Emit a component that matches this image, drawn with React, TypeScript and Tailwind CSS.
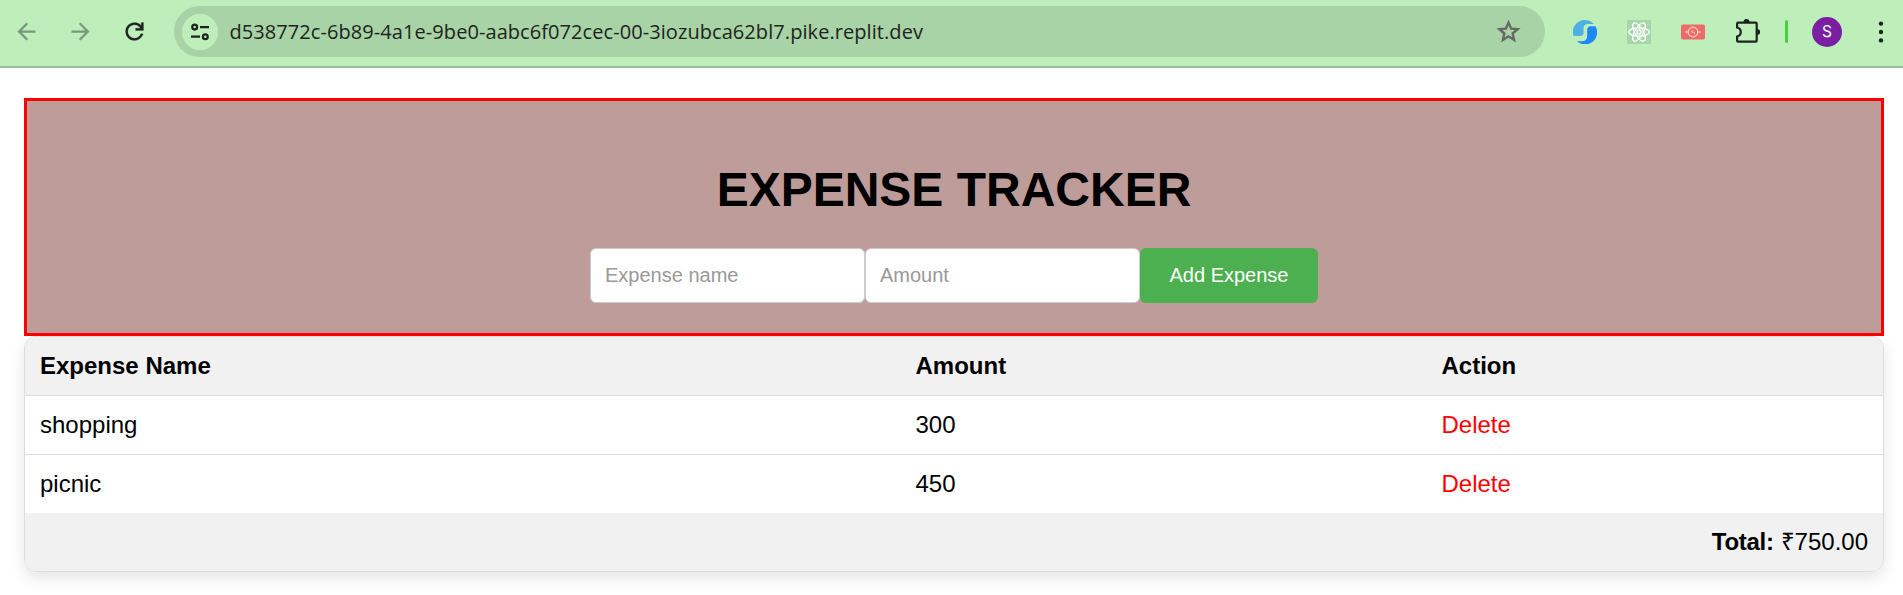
import React from "react";

const symbol = { viewBox: "0 -960 960 960", fill: "currentColor" };

function Toolbar() {
  return (
    <header className="flex h-[68px] items-start border-b-2 border-[#97c29b] bg-[#beefbb] pt-1.5 font-['Open_Sans',sans-serif]">
      <div className="flex h-[51px] w-[174px] shrink-0 items-center gap-[27px] pl-[13px] text-[#1f2320]">
        <svg {...symbol} className="size-[27px] text-[#79977a]">
          <path d="m313-440 224 224-57 56-320-320 320-320 57 56-224 224h487v80H313Z" />
        </svg>
        <svg {...symbol} className="size-[27px] text-[#79977a]">
          <path d="M647-440H160v-80h487L423-744l57-56 320 320-320 320-57-56 224-224Z" />
        </svg>
        <svg {...symbol} className="size-[27px]" stroke="currentColor" strokeWidth="8">
          <path d="M480-160q-134 0-227-93t-93-227q0-134 93-227t227-93q69 0 132 28.5T720-690v-110h80v280H520v-80h168q-32-56-87.5-88T480-720q-100 0-170 70t-70 170q0 100 70 170t170 70q77 0 139-44t87-116h84q-28 106-114 173t-196 67Z" />
        </svg>
      </div>
      <div className="flex h-[51px] w-[1371px] shrink-0 items-center rounded-full bg-[#a7d3a6] pr-[22px] pl-[7.5px]">
        <span className="flex size-9 shrink-0 items-center justify-center rounded-full bg-[#beefbb]">
          <svg viewBox="0 0 18 18" className="size-[18px]" fill="none" stroke="#1f2320" strokeWidth="2.3">
            <circle cx="3.7" cy="4.1" r="2.4" />
            <path d="M9 4.1h9M0 13.7h9" />
            <circle cx="14.3" cy="13.7" r="2.4" />
          </svg>
        </span>
        <span className="ml-3 grow text-[20px] leading-[27px] tracking-[0.07px] whitespace-nowrap text-[#1f2320]">
          d538772c-6b89-4a1e-9be0-aabc6f072cec-00-3iozubca62bl7.pike.replit.dev
        </span>
        <svg {...symbol} className="size-[29px] text-[#666a67]">
          <path d="m354-287 126-76 126 77-33-144 111-96-146-13-58-136-58 135-146 13 111 97-33 143ZM233-120l65-281L80-590l288-25 112-265 112 265 288 25-218 189 65 281-247-149-247 149Z" />
        </svg>
      </div>
      <div className="flex h-[51px] grow items-center pl-[27.5px]">
        <svg viewBox="0 0 24 24" className="size-6">
          <path d="M14.500 .3A12 12 0 0 0 .6 16h6.900q3-.4 3-3.500V8q.5-4 4-4h6.500Q18 1 14.500.3Z" fill="#4fb0e3" />
          <path d="M22.500 6.300A12 12 0 0 1 4 21.200H9.500q4.500-.6 4.700-4.700v-6.800q.3-3.200 3.300-3.400Z" fill="#1e88fb" />
        </svg>
        <svg viewBox="0 0 24 24" className="ml-[30px] size-6" fill="none" stroke="white" strokeWidth="1.3">
          <rect width="24" height="24" rx="1" fill="#a9d5aa" stroke="none" />
          <ellipse cx="12" cy="12" rx="10.300" ry="4.200" />
          <ellipse cx="12" cy="12" rx="10.300" ry="4.200" transform="rotate(60 12 12)" />
          <ellipse cx="12" cy="12" rx="10.300" ry="4.200" transform="rotate(120 12 12)" />
          <circle cx="12" cy="12" r="2" />
        </svg>
        <svg viewBox="0 0 24 24" className="ml-[30px] size-6" fill="none" stroke="#f8c4bb" strokeWidth="1.4">
          <rect y="4.500" width="24" height="15" rx="2" fill="#ec6b66" stroke="none" />
          <circle cx="12" cy="12" r="4.700" />
          <path d="M11 9.800v2.500h2.500v1.500" strokeWidth="1" />
          <path d="M4 12l2.500-1.700v3.400ZM20 12l-2.500-1.700v3.400Z" fill="#f8c4bb" stroke="none" />
        </svg>
        <svg viewBox="0 0 24 24" className="ml-[31px] size-6 -translate-y-px" fill="none" stroke="#1f2320" strokeWidth="2.200">
          <path d="M2.500 3.700h17.200q1 0 1 1v17q0 1-1 1H2.100q-1 0-1-1V17.500q3.700-1 3.700-4.500t-3.700-4.500V4.700q0-1 1-1Z" />
          <path d="M7.500 3a3 3 0 0 1 6 0ZM21.200 10a3 3 0 0 1 0 6Z" fill="#1f2320" stroke="none" />
        </svg>
        <span className="ml-[25.5px] h-[23px] w-[3px] rounded-sm bg-[#48d13e]" />
        <span className="ml-6 flex size-[30px] items-center justify-center rounded-full bg-[#7b1fa2] font-['Inter',sans-serif] text-[15.5px] text-white">
          S
        </span>
        <svg viewBox="0 0 6 22" className="ml-9 h-[22px] w-1.5" fill="#1f2320">
          <circle cx="3" cy="2.600" r="2.200" />
          <circle cx="3" cy="11" r="2.200" />
          <circle cx="3" cy="19.400" r="2.200" />
        </svg>
      </div>
    </header>
  );
}

const expenses = [
  { name: "shopping", amount: 300 },
  { name: "picnic", amount: 450 },
];

export default function App() {
  const total = expenses.reduce((sum, e) => sum + e.amount, 0);
  const field =
    "h-[55px] w-[275px] rounded-md border border-[#ccc] bg-white px-[14px] text-[20px] placeholder:text-[#999] outline-none";
  return (
    <div className="h-[595px] overflow-hidden bg-white font-['Liberation_Sans',sans-serif] text-black">
      <Toolbar />
      <main className="mt-[30px] mr-[19px] ml-6">
        <section className="flex h-[238px] flex-col items-center border-[3px] border-[#f00] bg-[#be9c99] pt-[61px]">
          <h1 className="h-[86px] text-[48px] leading-[55px] font-bold">EXPENSE TRACKER</h1>
          <form className="flex">
            <input className={field} placeholder="Expense name" />
            <input className={field} placeholder="Amount" />
            <button type="button" className="h-[55px] w-[178px] rounded-md bg-[#4caf50] pb-0.5 text-[20px] text-white">
              Add Expense
            </button>
          </form>
        </section>
        <div className="overflow-hidden rounded-xl border border-[#ddd] text-[24px] leading-[28px] shadow-[0_6px_15px_rgba(0,0,0,0.1)]">
          <table className="w-full table-fixed border-collapse text-left">
            <colgroup>
              <col className="w-[875.5px]" />
              <col className="w-[526px]" />
              <col />
            </colgroup>
            <thead>
              <tr className="h-[58px] border-b border-[#ddd] bg-[#f1f1f1]">
                <th className="px-[15px]">Expense Name</th>
                <th className="px-[15px]">Amount</th>
                <th className="px-[15px]">Action</th>
              </tr>
            </thead>
            <tbody>
              {expenses.map((e) => (
                <tr key={e.name} className="h-[59px] border-b border-[#ddd] last:border-b-0">
                  <td className="px-[15px]">{e.name}</td>
                  <td className="px-[15px]">{e.amount}</td>
                  <td className="px-[15px] text-[#f00]">Delete</td>
                </tr>
              ))}
            </tbody>
          </table>
          <div className="flex h-[58px] items-center justify-end gap-[7px] bg-[#f1f1f1] px-[15px]">
            <b className="tracking-[-0.3px]">Total:</b>
            <span>₹{total.toFixed(2)}</span>
          </div>
        </div>
      </main>
    </div>
  );
}
